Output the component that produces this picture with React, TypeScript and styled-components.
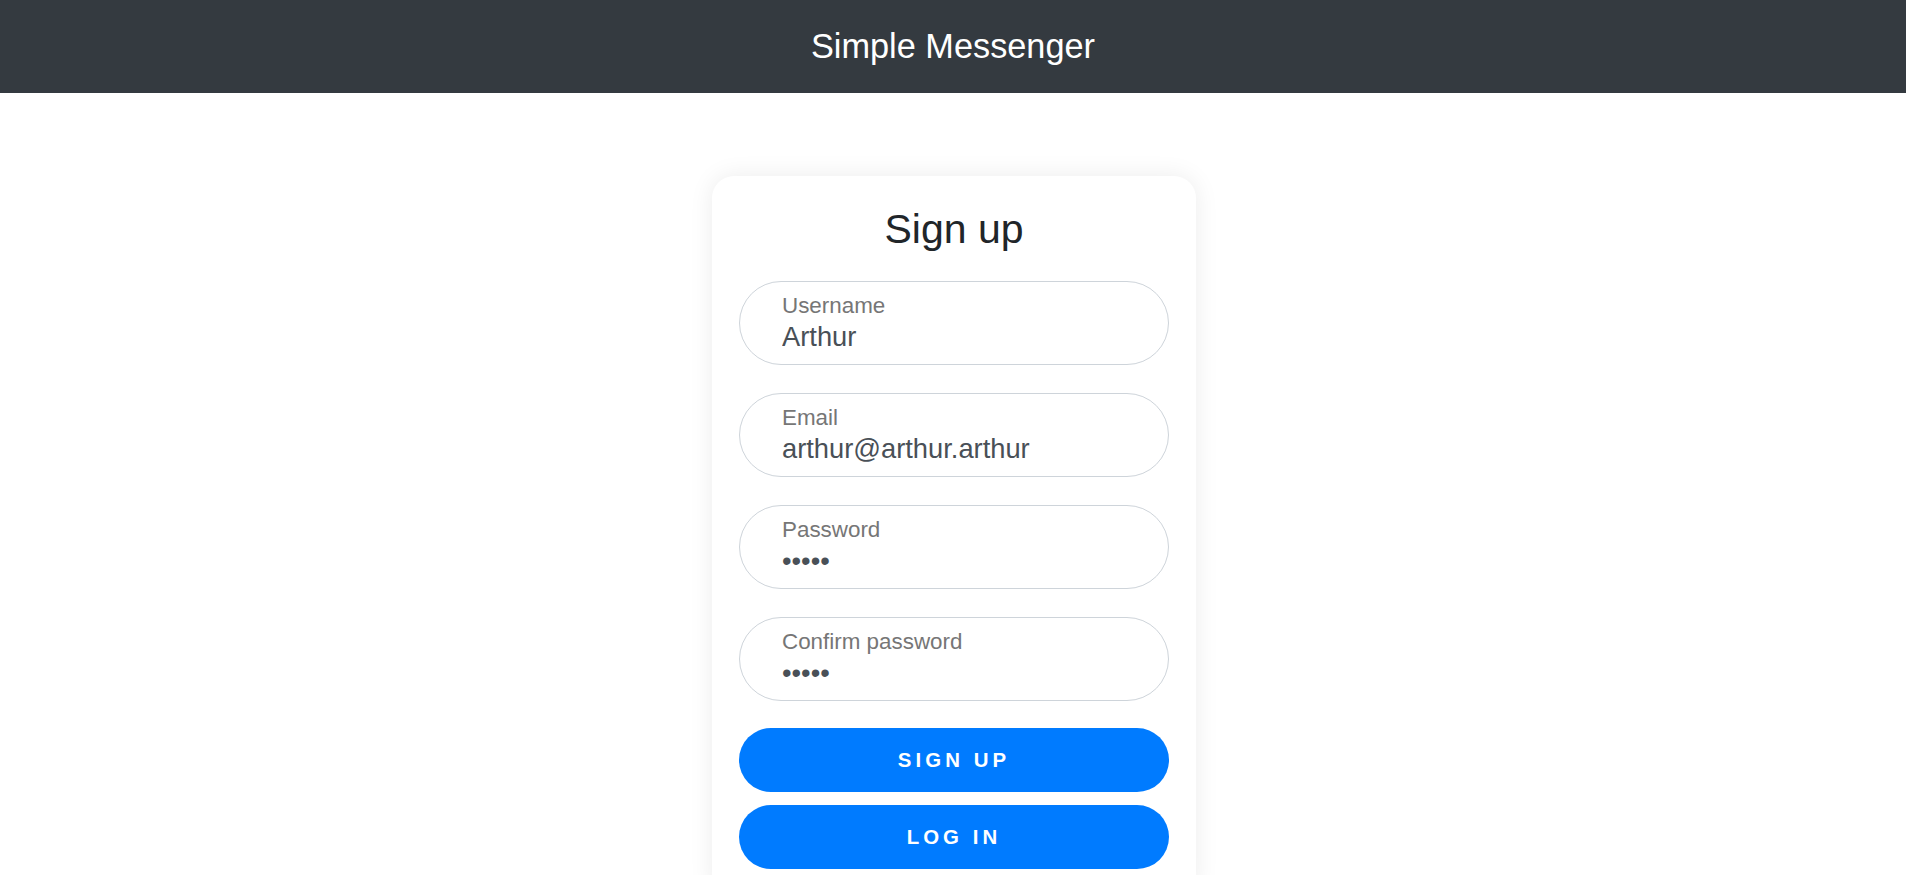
import React from "react";
import styled, { createGlobalStyle } from "styled-components";

const GlobalStyle = createGlobalStyle`
  html, body {
    margin: 0;
    padding: 0;
    background: #ffffff;
    font-family: "Liberation Sans", Arial, Helvetica, sans-serif;
  }
  * { box-sizing: border-box; }
`;

const Page = styled.div`
  min-height: 100vh;
  display: flex;
  flex-direction: column;
`;

const Header = styled.header`
  height: 93px;
  background: #343a40;
  display: flex;
  align-items: center;
  justify-content: center;
`;

const Brand = styled.h1`
  margin: 0;
  font-size: 34.3px;
  font-weight: 400;
  color: #ffffff;
  line-height: 1.2;
  padding-top: 1px;
`;

const Main = styled.main`
  display: flex;
  justify-content: center;
  padding: 83px 0 0 2px;
`;

const Card = styled.form`
  width: 484px;
  background: #ffffff;
  border-radius: 22px;
  box-shadow: 0 0 24px rgba(0, 0, 0, 0.08);
  padding: 29px 27px 28px;
  display: flex;
  flex-direction: column;
`;

const Title = styled.h2`
  margin: 0 0 27px;
  text-align: center;
  font-size: 41px;
  font-weight: 400;
  line-height: 49px;
  color: #212529;
`;

const Fields = styled.div`
  display: flex;
  flex-direction: column;
  gap: 28px;
`;

const Field = styled.label`
  height: 84px;
  border: 1px solid #ced4da;
  border-radius: 42px;
  padding: 11px 42px;
  display: flex;
  flex-direction: column;
  gap: 1px;
`;

const FieldLabel = styled.span`
  font-size: 22.4px;
  line-height: 26px;
  color: #767676;
`;

const FieldInput = styled.input`
  border: none;
  outline: none;
  background: transparent;
  padding: 0;
  margin: 0;
  height: 33px;
  font-family: "Liberation Sans", Arial, Helvetica, sans-serif;
  font-size: 27.3px;
  line-height: 33px;
  color: #495057;
  width: 100%;
`;

const Actions = styled.div`
  display: flex;
  flex-direction: column;
  gap: 13px;
  margin-top: 27px;
`;

const Button = styled.button`
  height: 64px;
  border: none;
  border-radius: 32px;
  background: #007bff;
  color: #ffffff;
  font-family: "Liberation Sans", Arial, Helvetica, sans-serif;
  font-size: 20.4px;
  font-weight: 700;
  letter-spacing: 0.2em;
  text-transform: uppercase;
  cursor: pointer;
  padding: 0;
`;

const fields = [
  { label: "Username", type: "text", value: "Arthur" },
  { label: "Email", type: "email", value: "arthur@arthur.arthur" },
  { label: "Password", type: "password", value: "12345" },
  { label: "Confirm password", type: "password", value: "12345" },
];

export default function App() {
  return (
    <Page>
      <GlobalStyle />
      <Header>
        <Brand>Simple Messenger</Brand>
      </Header>
      <Main>
        <Card onSubmit={(e) => e.preventDefault()}>
          <Title>Sign up</Title>
          <Fields>
            {fields.map((f) => (
              <Field key={f.label}>
                <FieldLabel>{f.label}</FieldLabel>
                <FieldInput type={f.type} defaultValue={f.value} readOnly />
              </Field>
            ))}
          </Fields>
          <Actions>
            <Button type="submit">Sign up</Button>
            <Button type="button">Log in</Button>
          </Actions>
        </Card>
      </Main>
    </Page>
  );
}
